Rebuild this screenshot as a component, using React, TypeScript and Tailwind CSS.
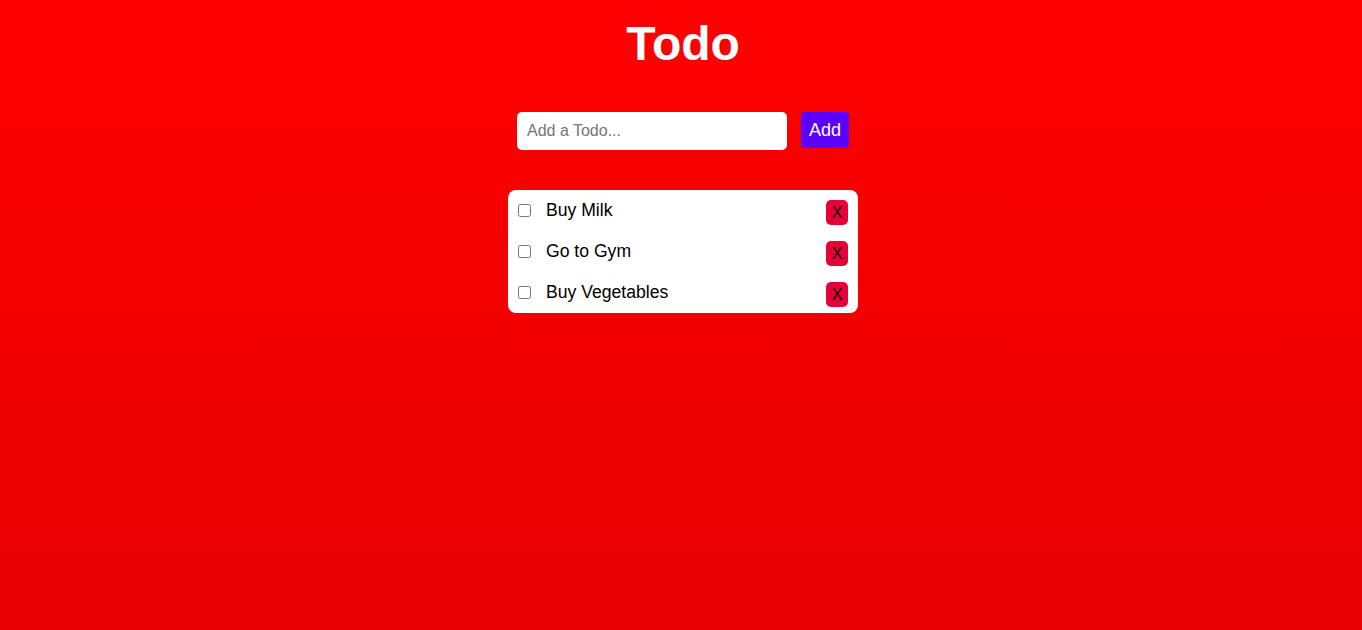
import { useState } from "react";

type Todo = { id: number; text: string; done: boolean };

const initialTodos: Todo[] = [
  { id: 1, text: "Buy Milk", done: false },
  { id: 2, text: "Go to Gym", done: false },
  { id: 3, text: "Buy Vegetables", done: false },
];

export default function App() {
  const [todos, setTodos] = useState<Todo[]>(initialTodos);
  const [text, setText] = useState("");

  const addTodo = () => {
    if (!text.trim()) return;
    setTodos([...todos, { id: Date.now(), text: text.trim(), done: false }]);
    setText("");
  };

  return (
    <main className="min-h-screen bg-gradient-to-b from-[#ff0000] to-[#e60000] pl-[4px] pt-4 font-['Liberation_Sans',Arial,sans-serif]">
      <h1 className="text-center text-[48px] font-bold leading-[56px] text-white">Todo</h1>

      <div className="mt-10 flex items-start justify-center gap-[14px]">
        <input
          value={text}
          onChange={(e) => setText(e.target.value)}
          placeholder="Add a Todo..."
          className="h-[38px] w-[270px] rounded-[5px] bg-white px-[10px] text-[16px] text-black outline-none placeholder:text-[#757575]"
        />
        <button
          onClick={addTodo}
          className="h-[36px] rounded-[4px] bg-[#5a00ff] px-2 text-[18px] leading-[20px] text-white"
        >
          Add
        </button>
      </div>

      <ul className="mx-auto mt-10 flex w-[350px] flex-col gap-4 rounded-[8px] bg-white pb-[6px] pl-[10px] pr-[10px] pt-[10px]">
        {todos.map((todo) => (
          <li key={todo.id} className="flex items-start">
            <input
              type="checkbox"
              checked={todo.done}
              onChange={() =>
                setTodos(todos.map((t) => (t.id === todo.id ? { ...t, done: !t.done } : t)))
              }
              className="mt-[4px] h-[13px] w-[13px]"
            />
            <span className={`ml-[15px] flex-1 text-[17.6px] leading-[20px] text-black ${todo.done ? "line-through" : ""}`}>
              {todo.text}
            </span>
            <button
              onClick={() => setTodos(todos.filter((t) => t.id !== todo.id))}
              className="flex h-[25px] w-[22px] items-center justify-center rounded-[5px] bg-[#e6003a] text-[16px] text-black"
            >
              X
            </button>
          </li>
        ))}
      </ul>
    </main>
  );
}
